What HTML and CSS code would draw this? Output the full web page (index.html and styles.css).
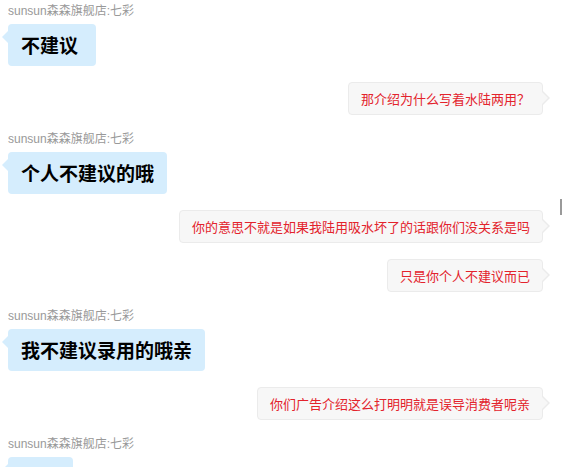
FILE: index.html
```html
<!DOCTYPE html>
<html lang="zh-CN">
<head>
<meta charset="utf-8">
<title>聊天记录</title>
<link rel="stylesheet" href="styles.css">
</head>
<body>
<div class="chat">
  <div class="msg in">
    <div class="name">sunsun森森旗舰店:七彩</div>
    <div class="bubble wide">不建议</div>
  </div>
  <div class="msg out">
    <div class="bubble">那介绍为什么写着水陆两用？</div>
  </div>
  <div class="msg in">
    <div class="name">sunsun森森旗舰店:七彩</div>
    <div class="bubble">个人不建议的哦</div>
  </div>
  <div class="msg out">
    <div class="bubble">你的意思不就是如果我陆用吸水坏了的话跟你们没关系是吗</div>
  </div>
  <div class="msg out">
    <div class="bubble">只是你个人不建议而已</div>
  </div>
  <div class="msg in">
    <div class="name">sunsun森森旗舰店:七彩</div>
    <div class="bubble">我不建议录用的哦亲</div>
  </div>
  <div class="msg out">
    <div class="bubble">你们广告介绍这么打明明就是误导消费者呢亲</div>
  </div>
  <div class="msg in">
    <div class="name">sunsun森森旗舰店:七彩</div>
    <div class="bubble blank"></div>
  </div>
</div>
<div class="scroll-mark"></div>
</body>
</html>
```

FILE: styles.css
```css
html, body {
  margin: 0;
  padding: 0;
  background: #ffffff;
  overflow: hidden;
}

body {
  width: 562px;
  height: 467px;
  position: relative;
  font-family: "Noto Sans CJK SC", "Liberation Sans", sans-serif;
}

.chat {
  display: flex;
  flex-direction: column;
  gap: 16px;
  padding: 3px 19px 0 8px;
}

.msg {
  display: flex;
  flex-direction: column;
}

.msg.in {
  align-items: flex-start;
  gap: 5px;
}

.msg.out {
  align-items: flex-end;
}

.name {
  font-family: "Liberation Sans", "Noto Sans CJK SC", sans-serif;
  font-size: 12px;
  line-height: 16px;
  color: #999999;
  white-space: nowrap;
}

.bubble {
  position: relative;
  white-space: nowrap;
}

.msg.in .bubble {
  background: #d5edfd;
  border-radius: 4px;
  padding: 8px 13px;
  font-size: 19px;
  line-height: 26px;
  font-weight: bold;
  color: #000000;
}

.msg.in .bubble.wide {
  padding-right: 18px;
}

.msg.in .bubble.blank {
  width: 39px;
  height: 26px;
}

.msg.in .bubble::before {
  content: "";
  position: absolute;
  left: -6px;
  top: 7px;
  border-top: 6px solid transparent;
  border-bottom: 6px solid transparent;
  border-right: 6px solid #d5edfd;
}

.msg.out .bubble {
  background: #f7f7f7;
  border: 1px solid #ebebeb;
  border-radius: 4px;
  padding: 6px 12px;
  font-size: 13px;
  line-height: 19px;
  color: #e3232c;
}

.msg.out .bubble::before {
  content: "";
  position: absolute;
  right: -8px;
  top: 8px;
  border-top: 7px solid transparent;
  border-bottom: 7px solid transparent;
  border-left: 7px solid #ebebeb;
}

.msg.out .bubble::after {
  content: "";
  position: absolute;
  right: -6px;
  top: 9px;
  border-top: 6px solid transparent;
  border-bottom: 6px solid transparent;
  border-left: 6px solid #f7f7f7;
}

.scroll-mark {
  position: absolute;
  left: 560px;
  top: 199px;
  width: 2px;
  height: 16px;
  background: #9a9a9a;
}
```
